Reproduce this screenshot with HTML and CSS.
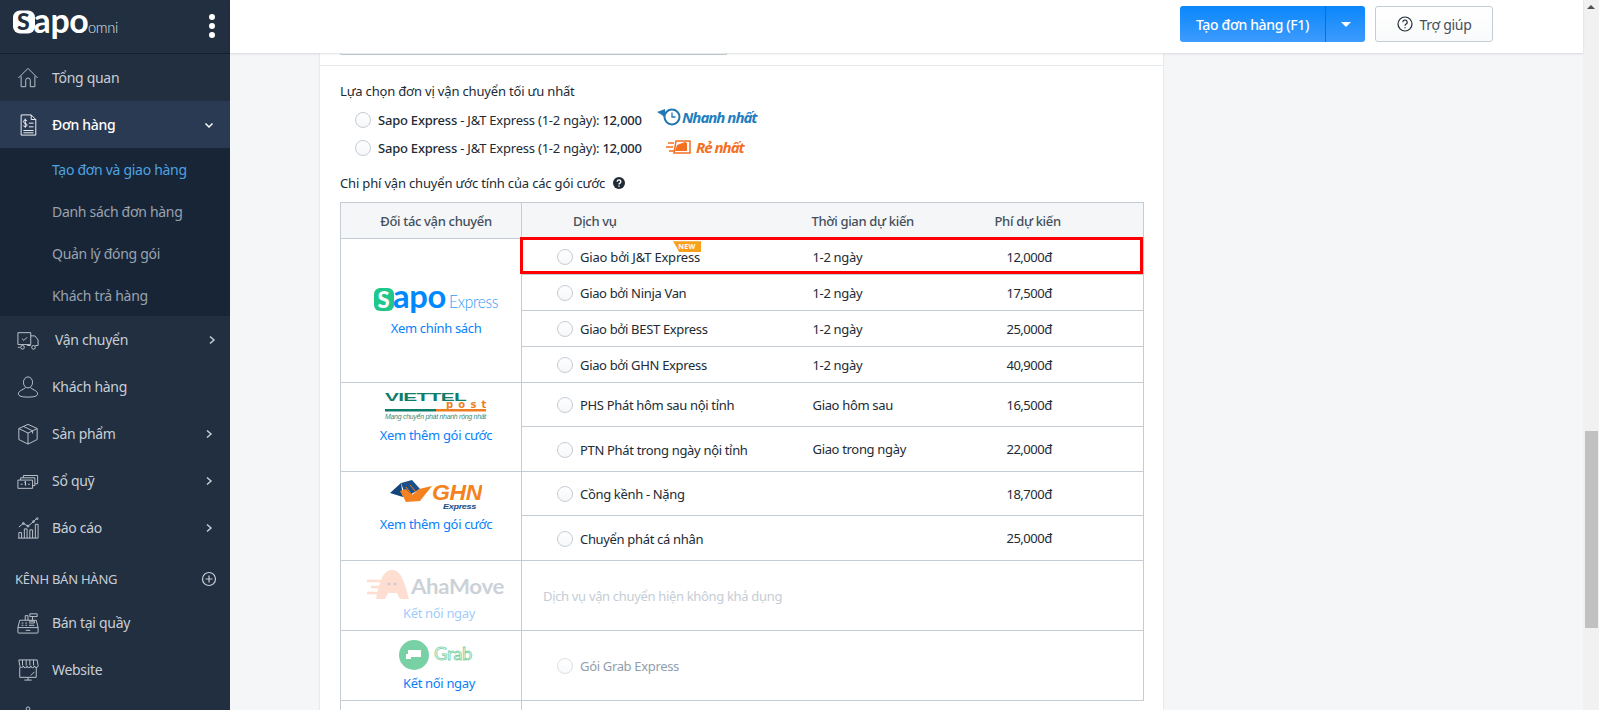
FILE: index.html
```html
<!DOCTYPE html>
<html lang="vi">
<head>
<meta charset="utf-8">
<title>Tạo đơn và giao hàng</title>
<link rel="stylesheet" href="styles.css">
</head>
<body>
<div class="app">
  <aside class="sidebar">
    <div class="brand">
      <svg class="brand-logo" width="110" height="44" viewBox="0 -7 110 44">
        <rect x="1" y="0.500" width="22" height="23" rx="7" fill="#fff"/>
        <text x="5" y="20" class="logo-s" fill="#212f40">S</text>
        <text x="21.500" y="22.500" class="logo-apo" fill="#fff" textLength="55" lengthAdjust="spacingAndGlyphs">apo</text>
        <text x="76" y="22.500" class="logo-omni" fill="#dfe3e8" textLength="30" lengthAdjust="spacingAndGlyphs">omni</text>
      </svg>
      <span class="kebab"><i></i><i></i><i></i></span>
    </div>
    <nav class="nav">
      <a class="nav-item">
        <svg class="nav-icon" viewBox="0 0 24 24"><path d="M1.500 12 12 1.500 22.500 12M4.500 10v11.500h5V14.500a2.500 2.500 0 0 1 5 0v7h5V10"/></svg>
        <span class="nav-label">Tổng quan</span>
      </a>
      <a class="nav-item is-open">
        <svg class="nav-icon" viewBox="0 0 24 24"><path d="M4.500 1h11l5 5v17h-16zM15.500 1v5h5M13 10h5M13 14h5M7 18h11M7 20.500h11"/><path d="M11 7.500C10 6 7 6.300 7 8.300c0 2.400 4 1.400 4 3.700 0 2-3 2.200-4 .8M9 5v10"/></svg>
        <span class="nav-label">Đơn hàng</span>
        <svg class="chev" viewBox="0 0 10 10"><path d="M1.500 3.500 5 7l3.500-3.500"/></svg>
      </a>
      <div class="subnav">
        <a class="sub-item is-current">Tạo đơn và giao hàng</a>
        <a class="sub-item">Danh sách đơn hàng</a>
        <a class="sub-item">Quản lý đóng gói</a>
        <a class="sub-item">Khách trả hàng</a>
      </div>
      <a class="nav-item nav-item-ship">
        <svg class="nav-icon" viewBox="0 0 24 24"><path d="M1 4h14v13H1zM15 7.500h4.500L23 12v6h-3M15 18h-4M1 20h2M5.500 10.500l2 2 3.500-3.500"/><circle cx="6" cy="20" r="2"/><circle cx="18" cy="20" r="2"/></svg>
        <span class="nav-label nav-label-wide">Vận chuyển</span>
        <svg class="chev" viewBox="0 0 10 10"><path d="M3 1.500 7 5 3 8.500"/></svg>
      </a>
      <a class="nav-item">
        <svg class="nav-icon" viewBox="0 0 24 24"><ellipse cx="12" cy="7" rx="5" ry="6"/><path d="M9 12.500c0 2-7.500 3-7.500 7 0 2.500 4 3.500 10.500 3.500s10.500-1 10.500-3.500c0-4-7.500-5-7.500-7"/></svg>
        <span class="nav-label">Khách hàng</span>
      </a>
      <a class="nav-item">
        <svg class="nav-icon" viewBox="0 0 24 24"><path d="M12 1.500 22 6v12l-10 5-10-5V6zM2 6l10 5 10-5M12 11v12M7 3.700 17 8.500v3"/></svg>
        <span class="nav-label">Sản phẩm</span>
        <svg class="chev" viewBox="0 0 10 10"><path d="M3 1.500 7 5 3 8.500"/></svg>
      </a>
      <a class="nav-item">
        <svg class="nav-icon" viewBox="0 0 24 24"><path d="M1 11h16v9H1zM4 11V8.500h15.500V17H17M7 8.500V6h15.500v9h-3M4 15.500h2M12 15.500h2M9.500 13c-1-.8-1.500.2-.5 1.300s1 2-.5 1.700M9.200 12v5"/></svg>
        <span class="nav-label">Sổ quỹ</span>
        <svg class="chev" viewBox="0 0 10 10"><path d="M3 1.500 7 5 3 8.500"/></svg>
      </a>
      <a class="nav-item">
        <svg class="nav-icon" viewBox="0 0 24 24"><path d="M1 23h22M2 23v-6h3v6M8 23V13h3v10M14 23v-9h3v9M20 23V8h3v15M2 11l5-4 5 3 6-5 3-3"/><circle cx="7" cy="7" r="1"/><circle cx="12" cy="10" r="1"/><circle cx="18" cy="5" r="1"/><circle cx="22" cy="1.800" r="1"/></svg>
        <span class="nav-label">Báo cáo</span>
        <svg class="chev" viewBox="0 0 10 10"><path d="M3 1.500 7 5 3 8.500"/></svg>
      </a>
      <div class="channel-head">
        <span>KÊNH BÁN HÀNG</span>
        <svg class="add-icon" viewBox="0 0 16 16"><circle cx="8" cy="8" r="6.500"/><path d="M8 4.500v7M4.500 8h7"/></svg>
      </div>
      <a class="nav-item">
        <svg class="nav-icon" viewBox="0 0 24 24"><path d="M2 23h20a1 1 0 0 0 1-1v-5H1v5a1 1 0 0 0 1 1zM1 17l2-8h18l2 8M9 9V4h3v5M14 5V2h8v3h-8zM17 5v4M5 12h2M9 12h2M13 12h6v-2h-6M5 14.500h2M9 14.500h2M13 14.500h6M9.500 20h5"/></svg>
        <span class="nav-label">Bán tại quầy</span>
      </a>
      <a class="nav-item">
        <svg class="nav-icon" viewBox="0 0 24 24"><path d="M2 1h20l1 6a2 2 0 0 1-4 .5 2 2 0 0 1-4 0 2 2 0 0 1-4 0 2 2 0 0 1-4 0 2 2 0 0 1-4-.5zM6 1v6M10 1v6M14 1v6M18 1v6M3 9v11h18V9M12 20v3M8 23h8M15 18l4-4"/></svg>
        <span class="nav-label">Website</span>
      </a>
      <a class="nav-item">
        <svg class="nav-icon" viewBox="0 0 24 24"><circle cx="12" cy="3" r="2"/><path d="M3 12l9-7 9 7v10H3z"/></svg>
      </a>
    </nav>
  </aside>

  <div class="workspace">
    <header class="topbar">
      <div class="split-btn">
        <button class="btn-primary btn-create">Tạo đơn hàng (F1)</button>
        <button class="btn-primary btn-caret"><i class="caret"></i></button>
      </div>
      <button class="btn-help">
        <svg class="help-icon" viewBox="0 0 16 16"><circle cx="8" cy="8" r="7"/><path d="M5.800 6.200a2.200 2.200 0 1 1 3.400 1.900c-.8.500-1.200.9-1.200 1.700M8 11.300v1"/></svg>
        Trợ giúp
      </button>
    </header>

    <main class="content">
      <section class="card">
        <div class="card-top"><div class="input-stub"></div></div>
        <div class="card-body">
          <p class="section-title">Lựa chọn đơn vị vận chuyển tối ưu nhất</p>
          <div class="best-list">
            <label class="best-row">
              <span class="radio"></span>
              <span class="best-text"><b>Sapo Express</b> - J&amp;T Express (1-2 ngày): <b>12,000</b></span>
              <span class="tag tag-fast">
                <svg class="tag-icon" width="24" height="20" viewBox="0 0 24 20"><path d="M0 5 8 2l1 10-4-4z" fill="#1f77b4"/><circle cx="15" cy="10" r="7.500" fill="#fff" stroke="#1f77b4" stroke-width="2"/><path d="M15 5.500V10h3.500" fill="none" stroke="#1f77b4" stroke-width="1.300"/></svg>
                <em>Nhanh nhất</em>
              </span>
            </label>
            <label class="best-row">
              <span class="radio"></span>
              <span class="best-text"><b>Sapo Express</b> - J&amp;T Express (1-2 ngày): <b>12,000</b></span>
              <span class="tag tag-cheap">
                <svg class="tag-icon" width="26" height="16" viewBox="0 0 26 16"><path d="M0 8h7M2 4h6M3 12h5" stroke="#f36f21" stroke-width="1.500"/><path d="M10 2h14v12H8z" fill="#fff" stroke="#f36f21" stroke-width="1.500"/><path d="M11 6l8-3 2 1v8H9z" fill="#f36f21"/></svg>
                <em>Rẻ nhất</em>
              </span>
            </label>
          </div>
          <p class="section-title section-title-fee">Chi phí vận chuyển ước tính của các gói cước
            <svg class="info-icon" width="12" height="12" viewBox="0 0 12 12"><circle cx="6" cy="6" r="6" fill="#212b35"/><path d="M4.200 4.700a1.800 1.800 0 1 1 2.800 1.500c-.7.400-1 .7-1 1.300M6 8.600v1.200" fill="none" stroke="#fff" stroke-width="1.400"/></svg>
          </p>

          <div class="table-wrap">
            <table class="rates">
              <colgroup><col class="col-partner"><col class="col-service"><col class="col-time"><col class="col-fee"></colgroup>
              <thead>
                <tr>
                  <th class="th-partner">Đối tác vận chuyển</th>
                  <th class="th-service">Dịch vụ</th>
                  <th class="th-time">Thời gian dự kiến</th>
                  <th class="th-fee">Phí dự kiến</th>
                </tr>
              </thead>
              <tbody>
                <tr class="row-s">
                  <td class="partner partner-sapo" rowspan="4">
                    <svg class="partner-logo logo-sapo" width="124" height="40" viewBox="0 -7 124 40">
                      <rect x="0" y="0" width="20" height="23" rx="6" fill="#1fc78a"/>
                      <text x="3.500" y="19.500" class="logo-s-small" fill="#fff">S</text>
                      <text x="19" y="19.500" class="logo-apo-small" fill="#0088ff" textLength="53" lengthAdjust="spacingAndGlyphs">apo</text>
                      <text x="75" y="19.500" class="logo-express" fill="#2f9bf5" textLength="49" lengthAdjust="spacingAndGlyphs">Express</text>
                    </svg>
                    <a class="link">Xem chính sách</a>
                  </td>
                  <td class="service"><span class="radio"></span><span class="svc-name svc-name-first">Giao bởi J&amp;T Express<span class="ribbon">NEW</span></span></td>
                  <td class="time">1-2 ngày</td>
                  <td class="fee">12,000đ</td>
                </tr>
                <tr class="row-s">
                  <td class="service"><span class="radio"></span><span class="svc-name">Giao bởi Ninja Van</span></td>
                  <td class="time">1-2 ngày</td>
                  <td class="fee">17,500đ</td>
                </tr>
                <tr class="row-s">
                  <td class="service"><span class="radio"></span><span class="svc-name">Giao bởi BEST Express</span></td>
                  <td class="time">1-2 ngày</td>
                  <td class="fee">25,000đ</td>
                </tr>
                <tr class="row-s">
                  <td class="service"><span class="radio"></span><span class="svc-name">Giao bởi GHN Express</span></td>
                  <td class="time">1-2 ngày</td>
                  <td class="fee">40,900đ</td>
                </tr>
                <tr class="row-m">
                  <td class="partner" rowspan="2">
                    <svg class="partner-logo" width="104" height="32" viewBox="0 0 104 32">
                      <text x="1" y="10" class="vt-name" fill="#0f7d6b" textLength="81" lengthAdjust="spacingAndGlyphs">VIETTEL</text>
                      <text x="62" y="17" class="vt-post" fill="#ee7d22" textLength="40">post</text>
                      <rect x="1" y="18" width="51" height="2.500" fill="#0f7d6b"/>
                      <rect x="52" y="18" width="50" height="2.500" fill="#ee7d22"/>
                      <text x="1" y="28" class="vt-tag" fill="#3b8b78" textLength="101" lengthAdjust="spacingAndGlyphs">Mạng chuyển phát nhanh rộng nhất</text>
                    </svg>
                    <a class="link">Xem thêm gói cước</a>
                  </td>
                  <td class="service"><span class="radio"></span><span class="svc-name">PHS Phát hôm sau nội tỉnh</span></td>
                  <td class="time">Giao hôm sau</td>
                  <td class="fee">16,500đ</td>
                </tr>
                <tr class="row-m2">
                  <td class="service"><span class="radio"></span><span class="svc-name">PTN Phát trong ngày nội tỉnh</span></td>
                  <td class="time">Giao trong ngày</td>
                  <td class="fee">22,000đ</td>
                </tr>
                <tr class="row-m">
                  <td class="partner" rowspan="2">
                    <svg class="partner-logo" width="92" height="32" viewBox="0 0 92 32">
                      <path d="M0 13 11 3l2 14z" fill="#12467a"/>
                      <path d="M11 3 22 0l8 9-14 8z" fill="#1c4f86"/>
                      <path d="M10 11 l6 11 14-1 12-15-13 3-7 6-6-6z" fill="#f58220"/>
                      <path d="M16 7l6 8M20 5l6 7" stroke="#f58220" stroke-width="1"/>
                      <text x="42" y="20" class="ghn-name" fill="#f58220" textLength="50" lengthAdjust="spacingAndGlyphs">GHN</text>
                      <text x="53" y="29" class="ghn-sub" fill="#1c4f86" textLength="33" lengthAdjust="spacingAndGlyphs">Express</text>
                    </svg>
                    <a class="link">Xem thêm gói cước</a>
                  </td>
                  <td class="service"><span class="radio"></span><span class="svc-name">Cồng kềnh - Nặng</span></td>
                  <td class="time"></td>
                  <td class="fee">18,700đ</td>
                </tr>
                <tr class="row-m2">
                  <td class="service"><span class="radio"></span><span class="svc-name">Chuyển phát cá nhân</span></td>
                  <td class="time"></td>
                  <td class="fee">25,000đ</td>
                </tr>
                <tr class="row-l">
                  <td class="partner">
                    <svg class="partner-logo is-faded" width="140" height="32" viewBox="0 0 140 32">
                      <path d="M10 30C14 10 18 1 26 1s12 9 17 29h-9l-3-6h-9l-3 6z" fill="#fbb79a"/>
                      <path d="M1 12h14M5 18h12M1 24h12" stroke="#fbb79a" stroke-width="2.500"/>
                      <circle cx="23" cy="15" r="1.300" fill="#889"/><circle cx="29" cy="15" r="1.300" fill="#889"/>
                      <text x="45" y="25" class="aha-name" fill="#8f9bab" textLength="93" lengthAdjust="spacingAndGlyphs">AhaMove</text>
                    </svg>
                    <a class="link link-faded link-connect">Kết nối ngay</a>
                  </td>
                  <td class="unavailable" colspan="3">Dịch vụ vận chuyển hiện không khả dụng</td>
                </tr>
                <tr class="row-l">
                  <td class="partner">
                    <svg class="partner-logo is-soft" width="74" height="32" viewBox="0 0 74 32">
                      <circle cx="15" cy="16" r="15" fill="#1fb36b"/>
                      <path d="M9 11h13v7H9zM7 15h5v5H7z" fill="#fff"/>
                      <text x="35" y="21" class="grab-name" fill="none" stroke="#1fb36b" textLength="38" lengthAdjust="spacingAndGlyphs">Grab</text>
                    </svg>
                    <a class="link link-connect">Kết nối ngay</a>
                  </td>
                  <td class="service service-off"><span class="radio radio-off"></span><span class="svc-name">Gói Grab Express</span></td>
                  <td class="time"></td>
                  <td class="fee"></td>
                </tr>
                <tr class="row-l">
                  <td class="partner"></td>
                  <td class="service" colspan="3"></td>
                </tr>
              </tbody>
            </table>
            <div class="pick-frame"></div>
          </div>
        </div>
      </section>
    </main>
  </div>

  <div class="scrollbar">
    <i class="scroll-up"></i>
    <div class="scroll-thumb"></div>
  </div>
</div>
</body>
</html>
```

FILE: styles.css
```css
* { box-sizing: border-box; }
html, body { margin: 0; height: 100%; overflow: hidden; }
body {
  font-family: "Noto Sans", "Open Sans", sans-serif;
  font-size: 13px;
  color: #212b35;
  background: #f4f6f8;
}
.app { display: flex; height: 710px; overflow: hidden; }

/* Sidebar */
.sidebar { width: 230px; flex: none; background: #212f40; color: #c8ced6; overflow: hidden; letter-spacing: -.3px; }
.brand {
  height: 54px;
  display: flex;
  align-items: center;
  justify-content: space-between;
  padding: 0 15px 0 12px;
  border-bottom: 1px solid #15212e;
}
.brand-logo { display: block; margin-top: -4px; }
.logo-s { font: 900 23px "Lato", sans-serif; }
.logo-apo { font: 700 35px "Lato", sans-serif; }
.logo-omni { font: 300 15px "Lato", sans-serif; }
.kebab { display: flex; flex-direction: column; gap: 3px; margin-top: -2px; }
.kebab i { width: 6px; height: 6px; border-radius: 50%; background: #fff; }

.nav-item { height: 47px; display: flex; align-items: center; padding: 0 16px 0 17px; font-size: 14px; }
.nav-item-ship { padding-right: 13px; }
.nav-icon { width: 22px; height: 22px; flex: none; margin-right: 13px; fill: none; stroke: #c8ced6; stroke-width: 1; }
.nav-label { flex: 1; }
.nav-label-wide { margin-left: 3px; }
.chev { width: 10px; height: 10px; flex: none; fill: none; stroke: #c8ced6; stroke-width: 1.500; }
.is-open { background: #2a3a52; color: #fff; font-weight: 500; height: 47px; }
.is-open .nav-icon { stroke: #fff; }
.is-open .chev { stroke: #fff; }
.subnav { background: #182537; padding: 1px 0; height: 168px; }
.sub-item { display: flex; align-items: center; height: 41.800px; padding-left: 52px; font-size: 14px; color: #9aa2ae; }
.is-current { color: #4fa3e0; }
.channel-head {
  height: 48px;
  padding: 8px 13px 0 15px;
  display: flex;
  align-items: center;
  justify-content: space-between;
  font-size: 13px;
  letter-spacing: -.25px;
  color: #c8ced6;
}
.add-icon { width: 16px; height: 16px; fill: none; stroke: #c8ced6; stroke-width: 1.200; }

/* Top bar */
.workspace { flex: 1; min-width: 0; display: flex; flex-direction: column; }
.topbar {
  height: 53px;
  flex: none;
  background: #fff;
  box-shadow: 0 1px 2px rgba(33, 43, 53, .14);
  display: flex;
  align-items: center;
  justify-content: flex-end;
  gap: 10px;
  padding: 0 90px 5px 0;
  position: relative;
  z-index: 1;
}
.split-btn { display: flex; }
.btn-primary {
  height: 36px;
  border: 0;
  color: #fff;
  font: 500 14px "Noto Sans", sans-serif;
  letter-spacing: -.35px;
  background: linear-gradient(180deg, #0a87fb, #3d9bfd);
}
.btn-create { width: 146px; border-radius: 3px 0 0 3px; border-right: 1px solid #0f6fd0; }
.btn-caret { width: 39px; border-radius: 0 3px 3px 0; display: flex; align-items: center; justify-content: center; }
.caret { width: 0; height: 0; border: 5px solid transparent; border-top: 5px solid #fff; border-bottom: 0; }
.btn-help {
  width: 118px;
  height: 36px;
  border: 1px solid #c4cdd5;
  border-radius: 3px;
  background: linear-gradient(180deg, #fff, #f9fafb);
  color: #454f5b;
  font: 14px "Noto Sans", sans-serif;
  letter-spacing: -.3px;
  display: flex;
  align-items: center;
  justify-content: center;
  gap: 7px;
}
.help-icon { width: 16px; height: 16px; fill: none; stroke: #212b35; stroke-width: 1.200; }

/* Main card */
.content { flex: 1; min-height: 0; overflow: hidden; padding-left: 90px; }
.card { width: 843px; height: 700px; background: #fff; box-shadow: 0 0 2px rgba(33, 43, 53, .15); }
.card-top { height: 13px; padding-left: 20px; border-bottom: 1px solid #e4e7eb; }
.input-stub { width: 387px; height: 2px; border: 1px solid #c4cdd5; border-top: 0; border-radius: 0 0 3px 3px; }
.card-body { padding: 15px 20px 0; }
.section-title { margin: 0; line-height: 20px; font-size: 13px; letter-spacing: -.17px; }
.best-list { padding: 5px 0 0 15px; }
.best-row { display: flex; align-items: center; height: 28px; }
.best-text { margin-left: 7px; width: 273px; flex: none; font-size: 13px; white-space: nowrap; letter-spacing: -.22px; }
.best-text b { font-weight: 500; }
.tag { display: inline-flex; align-items: center; gap: 1px; margin-top: -7px; }
.tag em { font: italic 700 15px "Noto Sans", sans-serif; letter-spacing: -1px; }
.tag-fast { color: #1f7ec0; margin-left: 6px; }
.tag-cheap { color: #f36f21; margin-left: 15px; gap: 4px; margin-top: -3px; }
.section-title-fee { margin-top: 11px; display: flex; align-items: center; gap: 8px; }
.info-icon { flex: none; }

/* Rate table */
.table-wrap { position: relative; margin-top: 9px; }
.rates { border-collapse: collapse; table-layout: fixed; width: 803px; letter-spacing: -.33px; }
.col-partner { width: 181px; }
.col-service { width: 275px; }
.col-time { width: 165px; }
.col-fee { width: 182px; }
.rates th, .rates td { border: 1px solid #c4cdd5; padding: 0; font-size: 13px; }
.rates .time, .rates .fee { border-left: 0; border-right: 0; }
.rates .service { border-right: 0; }
.rates .fee { border-right: 1px solid #c4cdd5; letter-spacing: -.5px; }
.rates .unavailable { padding-left: 21px; color: #c4cdd5; }
.rates th { height: 36px; background: #f4f6f8; font-weight: 500; color: #454f5b; text-align: left; }
.rates .th-time, .rates .th-fee { border-left: 0; border-right: 0; }
.rates .th-service { border-right: 0; }
.rates .th-fee { border-right: 1px solid #c4cdd5; }
.th-partner { text-align: center !important; padding-left: 10px !important; }
.th-service { padding-left: 51px !important; }
.th-time { padding-left: 15px !important; }
.th-fee { padding-left: 33px !important; }
.row-s { height: 36px; }
.row-m { height: 44px; }
.row-m2 { height: 45px; }
.row-l { height: 70px; }
.partner { text-align: center; vertical-align: top; padding: 8px 0 0 10px !important; }
.partner-sapo { padding-top: 42px !important; }
.partner-logo { display: block; margin: 0 auto 3px; }
.partner-sapo .logo-sapo { margin-bottom: -2px; }
.is-faded { opacity: .45; }
.is-soft { opacity: .6; }
.link { color: #0a7ffb; font-size: 13px; }
.link-connect { margin-left: 6px; }
.link-faded { opacity: .4; }
.logo-s-small { font: 900 22px "Lato", sans-serif; }
.logo-apo-small { font: 700 33px "Lato", sans-serif; }
.logo-express { font: 300 17px "Lato", sans-serif; }
.vt-name { font: 900 10px "Liberation Sans", sans-serif; }
.vt-post { font: 700 10px "DejaVu Sans", sans-serif; }
.vt-tag { font: italic 400 8px "Liberation Sans", sans-serif; }
.ghn-name { font: italic 900 22px "Liberation Sans", sans-serif; }
.ghn-sub { font: italic 700 8px "Liberation Sans", sans-serif; }
.aha-name { font: 700 21px "Lato", sans-serif; }
.grab-name { font: 400 17px "Lato", sans-serif; stroke-width: .8px; }

.service { padding-left: 35px !important; }
.service .radio { vertical-align: middle; }
.svc-name { position: relative; margin-left: 7px; vertical-align: middle; }
.svc-name-first { letter-spacing: -.2px; }
.radio {
  display: inline-block;
  width: 16px;
  height: 16px;
  flex: none;
  border-radius: 50%;
  border: 1px solid #c4cdd5;
  background: linear-gradient(180deg, #fff, #f6f7f9);
}
.radio-off { opacity: .6; }
.service-off .svc-name { color: #919eab; }
.time { padding-left: 16px !important; }
.fee { padding-left: 45px !important; }
.ribbon {
  position: absolute;
  right: -1px;
  top: -7px;
  width: 28px;
  height: 11px;
  background: #f9a11b;
  color: #fff;
  font-size: 7px;
  font-weight: 700;
  line-height: 11px;
  text-align: center;
  letter-spacing: .4px;
  clip-path: polygon(0 0, 100% 0, 100% 100%, 22% 100%, 12% 50%);
}
.pick-frame {
  position: absolute;
  left: 180px;
  top: 35px;
  width: 623px;
  height: 37px;
  border: 3px solid #f00;
  pointer-events: none;
}

/* Window scrollbar */
.scrollbar { width: 16px; flex: none; background: #f1f1f1; padding: 0 1px 0 2px; position: relative; }
.scroll-up {
  display: block;
  width: 0;
  height: 0;
  margin: 5px 0 0 2px;
  border: 4px solid transparent;
  border-bottom: 4px solid #505050;
  border-top: 0;
}
.scroll-thumb { height: 197px; margin-top: 422px; background: #c1c1c1; }
```
